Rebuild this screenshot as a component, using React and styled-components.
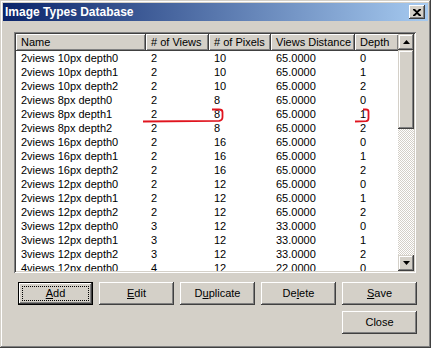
import React from "react";
import styled, { createGlobalStyle } from "styled-components";

const Global = createGlobalStyle`
  html, body { margin: 0; padding: 0; background: #d4d0c8; }
  body { font-family: "Liberation Sans", Arial, sans-serif; font-size: 11px; color: #000; }
`;

const raised = `
  box-shadow: inset -1px -1px #404040, inset 1px 1px #ffffff,
    inset -2px -2px #808080, inset 2px 2px #d4d0c8;
`;

const Window = styled.div`
  position: relative;
  box-sizing: border-box;
  width: 431px;
  height: 348px;
  padding: 3px;
  background: #d4d0c8;
  box-shadow: inset -1px -1px #404040, inset 1px 1px #d4d0c8,
    inset -2px -2px #808080, inset 2px 2px #ffffff;
  display: flex;
  flex-direction: column;
`;

const TitleBar = styled.div`
  height: 18px;
  display: flex;
  align-items: center;
  justify-content: space-between;
  padding: 0 2px 0 2px;
  background: linear-gradient(to right, #0a246a, #a6caf0);
`;

const TitleText = styled.span`
  color: #fff;
  font-weight: bold;
  font-size: 12px;
  padding-left: 0px;
  letter-spacing: 0px;
`;

const CloseBox = styled.div`
  width: 16px;
  height: 14px;
  background: #d4d0c8;
  ${raised}
  display: flex;
  align-items: center;
  justify-content: center;
  margin-right: 1px;
`;

const Body = styled.div`
  padding: 11px 12px 0 11px;
  display: flex;
  flex-direction: column;
`;

const ListBox = styled.div`
  box-sizing: border-box;
  height: 241px;
  padding: 2px;
  background: #fff;
  box-shadow: inset 1px 1px #808080, inset -1px -1px #ffffff,
    inset 2px 2px #404040, inset -2px -2px #d4d0c8;
  display: flex;
`;

const Content = styled.div`
  flex: 1;
  overflow: hidden;
  display: flex;
  flex-direction: column;
`;

const cols = "130px 63px 62px 84px 44px";

const HeaderRow = styled.div`
  display: grid;
  grid-template-columns: ${cols};
  height: 17px;
  flex: none;
`;

const HeaderCell = styled.div`
  background: #d4d0c8;
  ${raised}
  padding-left: 5px;
  display: flex;
  align-items: center;
  white-space: nowrap;
  overflow: hidden;
  padding-bottom: 1px;
`;

const Row = styled.div`
  display: grid;
  grid-template-columns: ${cols};
  height: 14px;
  line-height: 14px;
  flex: none;
`;

const Cell = styled.div`
  padding-left: 5px;
  white-space: nowrap;
  overflow: hidden;
`;

const ScrollBar = styled.div`
  width: 16px;
  display: flex;
  flex-direction: column;
  flex: none;
`;

const ScrollButton = styled.div`
  width: 16px;
  height: 16px;
  flex: none;
  background: #d4d0c8;
  box-shadow: inset -1px -1px #404040, inset 1px 1px #d4d0c8,
    inset -2px -2px #808080, inset 2px 2px #ffffff;
  display: flex;
  align-items: center;
  justify-content: center;
`;

const Thumb = styled.div`
  height: 79px;
  flex: none;
  background: #d4d0c8;
  box-shadow: inset -1px -1px #404040, inset 1px 1px #d4d0c8,
    inset -2px -2px #808080, inset 2px 2px #ffffff;
`;

const Track = styled.div`
  flex: 1;
  background: repeating-conic-gradient(#d4d0c8 0 25%, #ffffff 0 50%) 0 0 / 2px 2px;
`;

const ButtonGrid = styled.div`
  display: grid;
  grid-template-columns: repeat(5, 75px);
  grid-auto-rows: 23px;
  column-gap: 6px;
  row-gap: 6px;
  margin-top: 9px;
  padding-left: 4px;
`;

const Button = styled.div`
  position: relative;
  box-sizing: border-box;
  background: #d4d0c8;
  display: flex;
  align-items: center;
  justify-content: center;
  grid-column: ${(p) => p.$col || "auto"};
  ${(p) =>
    p.$default
      ? `border: 1px solid #000;
         box-shadow: inset -1px -1px #404040, inset 1px 1px #ffffff,
           inset -2px -2px #808080, inset 2px 2px #d4d0c8;`
      : raised}
  padding-bottom: 1px;
  u { text-decoration: underline; text-underline-offset: 1px; }
`;

const FocusRing = styled.span`
  position: absolute;
  inset: 3px;
  border: 1px dotted #000;
  pointer-events: none;
`;

const Annotation = styled.svg`
  position: absolute;
  left: 0;
  top: 0;
  pointer-events: none;
`;

const rows = [
  ["2views 10px depth0", "2", "10", "65.0000", "0"],
  ["2views 10px depth1", "2", "10", "65.0000", "1"],
  ["2views 10px depth2", "2", "10", "65.0000", "2"],
  ["2views 8px depth0", "2", "8", "65.0000", "0"],
  ["2views 8px depth1", "2", "8", "65.0000", "1"],
  ["2views 8px depth2", "2", "8", "65.0000", "2"],
  ["2views 16px depth0", "2", "16", "65.0000", "0"],
  ["2views 16px depth1", "2", "16", "65.0000", "1"],
  ["2views 16px depth2", "2", "16", "65.0000", "2"],
  ["2views 12px depth0", "2", "12", "65.0000", "0"],
  ["2views 12px depth1", "2", "12", "65.0000", "1"],
  ["2views 12px depth2", "2", "12", "65.0000", "2"],
  ["3views 12px depth0", "3", "12", "33.0000", "0"],
  ["3views 12px depth1", "3", "12", "33.0000", "1"],
  ["3views 12px depth2", "3", "12", "33.0000", "2"],
  ["4views 12px depth0", "4", "12", "22.0000", "0"],
];

const headers = ["Name", "# of Views", "# of Pixels", "Views Distance", "Depth"];

export default function App() {
  return (
    <>
      <Global />
      <Window>
        <TitleBar>
          <TitleText>Image Types Database</TitleText>
          <CloseBox>
            <svg width="8" height="7" viewBox="0 0 8 7">
              <path d="M0 0h2l2 2 2-2h2v1L5 3.5 8 6v1H6L4 5 2 7H0V6l3-2.5L0 1z" fill="#000" />
            </svg>
          </CloseBox>
        </TitleBar>
        <Body>
          <ListBox>
            <Content>
              <HeaderRow>
                {headers.map((h) => (
                  <HeaderCell key={h}>{h}</HeaderCell>
                ))}
              </HeaderRow>
              {rows.map((r, i) => (
                <Row key={i}>
                  {r.map((c, j) => (
                    <Cell key={j}>{c}</Cell>
                  ))}
                </Row>
              ))}
            </Content>
            <ScrollBar>
              <ScrollButton>
                <svg width="7" height="4" viewBox="0 0 7 4">
                  <path d="M3.5 0L7 4H0z" fill="#000" />
                </svg>
              </ScrollButton>
              <Thumb />
              <Track />
              <ScrollButton>
                <svg width="7" height="4" viewBox="0 0 7 4">
                  <path d="M0 0h7L3.5 4z" fill="#000" />
                </svg>
              </ScrollButton>
            </ScrollBar>
          </ListBox>
          <ButtonGrid>
            <Button $default>
              <FocusRing />
              <span><u>A</u>dd</span>
            </Button>
            <Button><span><u>E</u>dit</span></Button>
            <Button><span>D<u>u</u>plicate</span></Button>
            <Button><span>De<u>l</u>ete</span></Button>
            <Button><span><u>S</u>ave</span></Button>
            <Button $col="5">Close</Button>
          </ButtonGrid>
        </Body>
        <Annotation width="431" height="348">
          <path
            d="M143 121.5 L219 120.8 Q222.5 120.5 222.5 117 L222.5 112 Q222.5 109.5 219 109.5 L212 109.5"
            fill="none"
            stroke="#e0141e"
            strokeWidth="1.8"
          />
          <path
            d="M355 121.5 L366 121.2 Q368.5 121 368.5 118 L368.5 111.5 Q368.5 109.5 366 109.5 L363 109.5"
            fill="none"
            stroke="#e0141e"
            strokeWidth="1.8"
          />
        </Annotation>
      </Window>
    </>
  );
}
